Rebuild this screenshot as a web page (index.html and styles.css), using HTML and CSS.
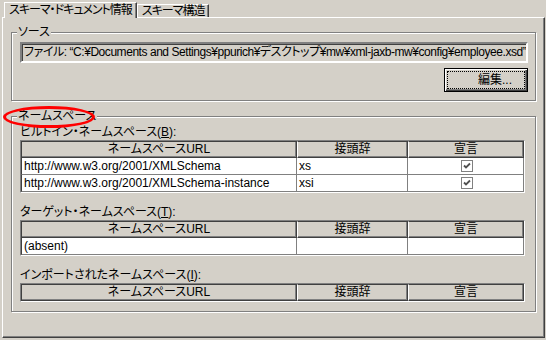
FILE: index.html
```html
<!DOCTYPE html>
<html lang="ja">
<head>
    <meta charset="UTF-8">
    <title>スキーマ・ドキュメント情報</title>
    <link rel="stylesheet" href="styles.css">
</head>
<body>
    <div class="window">
        <!-- Tabs -->
        <div class="tabs">
            <div class="tab active">スキーマ・ドキュメント情報</div>
            <div class="tab">スキーマ構造</div>
        </div>

        <div class="panel">
            <!-- Source -->
            <fieldset class="group source">
                <legend>ソース</legend>
                <div class="field">ファイル: “C:¥Documents and Settings¥ppurich¥デスクトップ¥mw¥xml-jaxb-mw¥config¥employee.xsd”</div>
                <div class="actions">
                    <button class="btn" type="button"><span class="focus">編集...</span></button>
                </div>
            </fieldset>

            <!-- Namespaces -->
            <fieldset class="group ns">
                <legend><span class="legend-text">ネームスペース<span class="mark"></span></span></legend>

                <div class="label first">ビルトイン・ネームスペース(<u>B</u>):</div>
                <table class="grid">
                    <tr>
                        <th class="c-url">ネームスペースURL</th>
                        <th class="c-prefix">接頭辞</th>
                        <th class="c-decl">宣言</th>
                    </tr>
                    <tr>
                        <td>http://www.w3.org/2001/XMLSchema</td>
                        <td>xs</td>
                        <td class="center">
                            <svg class="check" width="12" height="12" viewBox="0 0 12 12">
                                <rect x="0.5" y="0.5" width="11" height="11" fill="#fff" stroke="#808080"/>
                                <path d="M3 5.5 L5 7.5 L9 3.5" fill="none" stroke="#505050" stroke-width="1.8"/>
                            </svg>
                        </td>
                    </tr>
                    <tr>
                        <td>http://www.w3.org/2001/XMLSchema-instance</td>
                        <td>xsi</td>
                        <td class="center">
                            <svg class="check" width="12" height="12" viewBox="0 0 12 12">
                                <rect x="0.5" y="0.5" width="11" height="11" fill="#fff" stroke="#808080"/>
                                <path d="M3 5.5 L5 7.5 L9 3.5" fill="none" stroke="#505050" stroke-width="1.8"/>
                            </svg>
                        </td>
                    </tr>
                </table>

                <div class="label">ターゲット・ネームスペース(<u>T</u>):</div>
                <table class="grid">
                    <tr>
                        <th class="c-url">ネームスペースURL</th>
                        <th class="c-prefix">接頭辞</th>
                        <th class="c-decl">宣言</th>
                    </tr>
                    <tr>
                        <td>(absent)</td>
                        <td></td>
                        <td></td>
                    </tr>
                </table>

                <div class="label">インポートされたネームスペース(<u>I</u>):</div>
                <table class="grid">
                    <tr>
                        <th class="c-url">ネームスペースURL</th>
                        <th class="c-prefix">接頭辞</th>
                        <th class="c-decl">宣言</th>
                    </tr>
                </table>
            </fieldset>
        </div>
    </div>
</body>
</html>
```

FILE: styles.css
```css
body {
    margin: 0;
    background-color: #d4d0c8;
    font-family: "Liberation Sans", "Noto Sans CJK JP", sans-serif;
    font-size: 12px;
    line-height: 14px;
    color: #000;
    font-feature-settings: "palt";
}
.window {
    padding: 2px 1px 0 2px;
}
.tabs {
    display: flex;
    align-items: flex-end;
    height: 15px;
    padding-left: 2px;
}
.tab {
    box-sizing: border-box;
    height: 13px;
    padding: 0 4px 0 4px;
    border-top: 1px solid #fff;
    border-left: 1px solid #fff;
    border-right: 1px solid #404040;
    box-shadow: inset -1px 0 0 #808080;
    background-color: #d4d0c8;
    line-height: 12px;
    letter-spacing: -1px;
    white-space: nowrap;
}
.tab.active {
    position: relative;
    z-index: 1;
    height: 16px;
    margin-bottom: -1px;
    padding-top: 1px;
}
.panel {
    box-sizing: border-box;
    height: 321px;
    padding: 7px 8px 0 8px;
    border: 1px solid;
    border-color: #fff #404040 #404040 #fff;
    box-shadow: inset -1px -1px 0 #808080;
}
.group {
    min-width: 0;
    margin: 0;
    padding: 0 7px 0 8px;
    border: 1px solid #808080;
    box-shadow: 1px 1px 0 #fff, inset 1px 1px 0 #fff;
}
.group legend {
    margin-left: -3px;
    padding: 0 1px;
    background-color: #d4d0c8;
    line-height: 14px;
}
.field {
    margin-top: 3px;
    height: 17px;
    padding-left: 2px;
    border: 2px solid;
    border-color: #808080 #fff #fff #808080;
    box-shadow: inset 1px 1px 0 #404040;
    line-height: 17px;
    letter-spacing: -0.45px;
    white-space: nowrap;
    overflow: hidden;
}
.actions {
    display: flex;
    justify-content: flex-end;
    margin-top: 5px;
    padding-bottom: 8px;
}
.btn {
    width: 84px;
    height: 24px;
    padding: 3px;
    border: 1px solid #000;
    background-color: #d4d0c8;
    box-shadow: inset 1px 1px 0 #fff, inset -1px -1px 0 #404040, inset -2px -2px 0 #808080;
    font: inherit;
}
.focus {
    display: flex;
    align-items: center;
    justify-content: flex-end;
    height: 100%;
    padding-right: 12px;
    outline: 1px dotted #000;
}
.ns {
    margin-top: 8px;
    padding-bottom: 9px;
}
.legend-text {
    position: relative;
}
.mark {
    position: absolute;
    left: -15px;
    top: -3px;
    width: 86px;
    height: 16px;
    border: 3px solid #ff0000;
    border-radius: 50%;
}
.label {
    margin-top: 12px;
    height: 14px;
}
.label.first {
    margin-top: 2px;
}
.grid {
    width: 505px;
    margin-top: 1px;
    border-spacing: 0;
    border: 1px solid;
    border-color: #808080 #fff #fff #808080;
    table-layout: fixed;
}
.grid th {
    height: 15px;
    padding: 0;
    border-top: 1px solid #fff;
    border-left: 1px solid #fff;
    border-right: 1px solid #404040;
    border-bottom: 1px solid #404040;
    box-shadow: inset -1px -1px 0 #808080;
    font-weight: normal;
    line-height: 15px;
}
.grid tr:first-child th {
    border-top-color: #404040;
}
.grid th:first-child {
    border-left-color: #404040;
}
.grid td {
    height: 16px;
    padding: 0 0 0 2px;
    border-right: 1px solid #808080;
    border-bottom: 1px solid #808080;
    background-color: #fff;
    line-height: 16px;
    white-space: nowrap;
}
.grid td:first-child {
    border-left: 1px solid #404040;
}
.c-url {
    width: 274px;
}
.c-prefix {
    width: 109px;
}
.center {
    text-align: center;
}
.check {
    display: block;
    margin: 0 auto;
}
```
